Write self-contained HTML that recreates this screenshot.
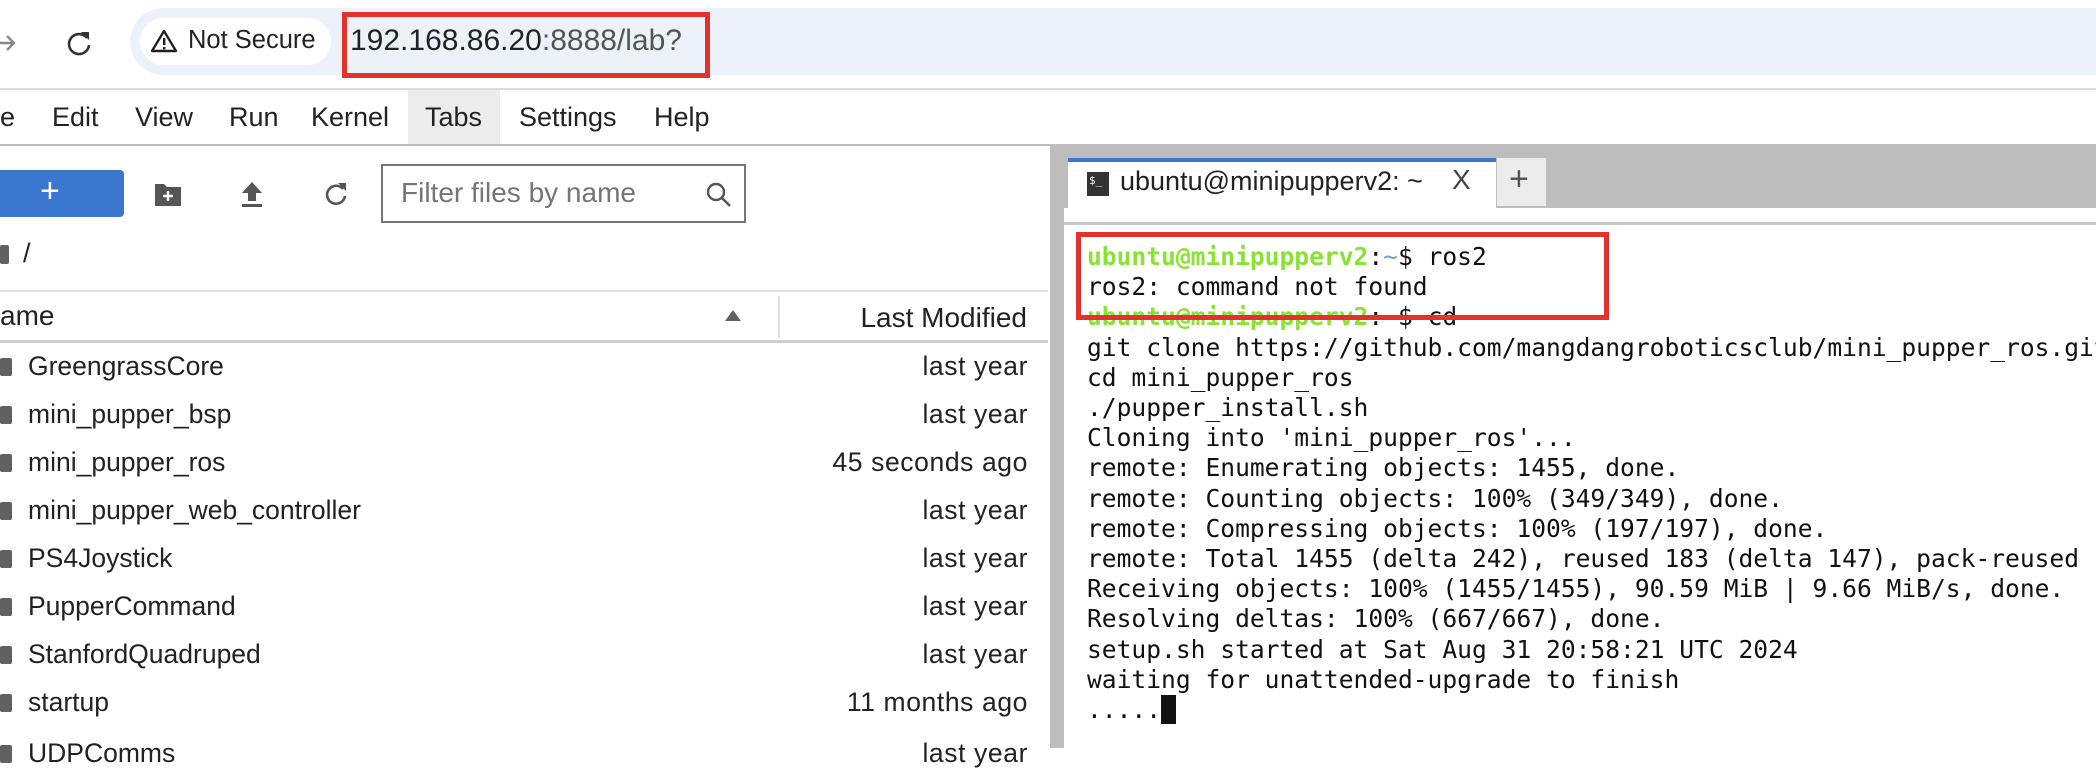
<!DOCTYPE html>
<html><head><meta charset="utf-8"><style>
*{margin:0;padding:0;box-sizing:border-box}
body{width:2096px;height:748px;overflow:hidden;background:#fff;font-family:"Liberation Sans",sans-serif;color:#222;position:relative}
.a{position:absolute;white-space:pre}
.menu{font-size:27px;top:102px;color:#222}
.row{position:absolute;left:0;width:1028px;height:48px;font-size:26.5px}
.row .ic{position:absolute;left:0;top:15px;width:12px;height:18px;background:#616161;border-radius:2px}
.row .n{position:absolute;left:28px;top:8px}
.row .d{position:absolute;right:0;top:8px;letter-spacing:0.6px}
.term{font-family:"DejaVu Sans Mono","Liberation Mono",monospace;font-size:24.6px;line-height:30.2px;color:#111}
.g{color:#8ae234;font-weight:bold}.b{color:#729fcf}
</style></head><body>
<div class="a" style="left:0;top:0;width:2096px;height:88px;background:#fff"></div>
<div class="a" style="left:130px;top:8px;width:2000px;height:67px;background:#edf2fa;border-radius:34px"></div>
<div class="a" style="left:140px;top:18px;width:191px;height:47px;background:#fff;border-radius:24px"></div>
<svg class="a" style="left:150px;top:28px" width="28" height="26" viewBox="0 0 28 26"><path d="M14 3 L26 23 H2 Z" fill="none" stroke="#222" stroke-width="2.4" stroke-linejoin="round"/><rect x="13" y="10" width="2.4" height="7" fill="#222"/><rect x="13" y="19" width="2.4" height="2.4" fill="#222"/></svg>
<div class="a" style="left:188px;top:26px;font-size:25.5px;color:#222">Not Secure</div>
<div class="a" style="left:350px;top:24px;font-size:30px;color:#222">192.168.86.20<span style="color:#555">:8888/lab?</span></div>
<div class="a" style="left:342px;top:12px;width:368px;height:66px;border:5px solid #e3322b"></div>
<svg class="a" style="left:0;top:28px" width="20" height="30"><path d="M0 15 H14 M7 8 L14 15 L7 22" stroke="#888" stroke-width="2.4" fill="none"/></svg>
<svg class="a" style="left:64px;top:28px" width="30" height="30" viewBox="0 0 30 30"><path d="M23 10 A10 10 0 1 0 25 17" stroke="#333" stroke-width="2.6" fill="none"/><path d="M17 4 L25 4 L25 12 Z" fill="#333"/></svg>
<div class="a" style="left:0;top:88px;width:2096px;height:2px;background:#ddd"></div>
<div class="a" style="left:408px;top:90px;width:92px;height:54px;background:#ececec"></div>
<div class="a menu" style="left:0">e</div>
<div class="a menu" style="left:52px">Edit</div>
<div class="a menu" style="left:135px">View</div>
<div class="a menu" style="left:229px">Run</div>
<div class="a menu" style="left:311px">Kernel</div>
<div class="a menu" style="left:425px">Tabs</div>
<div class="a menu" style="left:519px">Settings</div>
<div class="a menu" style="left:654px">Help</div>
<div class="a" style="left:0;top:144px;width:2096px;height:2px;background:#bdbdbd"></div>
<div class="a" style="left:0;top:170px;width:124px;height:47px;background:#3a78d0;border-radius:0 4px 4px 0"></div>
<div class="a" style="left:40px;top:172px;font-size:34px;color:#fff">+</div>
<svg class="a" style="left:154px;top:181px" width="28" height="26" viewBox="0 0 28 26"><path d="M1 3 H10 L13 6 H27 V25 H1 Z" fill="#555"/><path d="M14 10 V20 M9 15 H19" stroke="#fff" stroke-width="2.4"/></svg>
<svg class="a" style="left:240px;top:180px" width="24" height="28" viewBox="0 0 24 28"><path d="M12 2 L22 13 H16 V21 H8 V13 H2 Z" fill="#555"/><rect x="2" y="24" width="20" height="3" fill="#555"/></svg>
<svg class="a" style="left:322px;top:180px" width="28" height="28" viewBox="0 0 28 28"><path d="M21 9 A9 9 0 1 0 23 16" stroke="#555" stroke-width="2.6" fill="none"/><path d="M16 3 L24 3 L24 11 Z" fill="#555"/></svg>
<div class="a" style="left:381px;top:164px;width:365px;height:59px;border:2px solid #757575"></div>
<div class="a" style="left:401px;top:177px;font-size:28px;color:#757575">Filter files by name</div>
<svg class="a" style="left:704px;top:180px" width="30" height="30" viewBox="0 0 30 30"><circle cx="12" cy="12" r="8" stroke="#555" stroke-width="2.4" fill="none"/><path d="M18 18 L26 26" stroke="#555" stroke-width="2.6"/></svg>
<div class="a" style="left:0;top:245px;width:9px;height:19px;background:#616161;border-radius:2px"></div>
<div class="a" style="left:23px;top:238px;font-size:27px">/</div>
<div class="a" style="left:0;top:290px;width:1048px;height:2px;background:#e0e0e0"></div>
<div class="a" style="left:0;top:300px;font-size:28px">ame</div>
<svg class="a" style="left:725px;top:310px" width="16" height="12"><path d="M8 0 L16 11 H0 Z" fill="#616161"/></svg>
<div class="a" style="left:778px;top:296px;width:2px;height:42px;background:#e0e0e0"></div>
<div class="a" style="right:1069px;top:302px;font-size:28px">Last Modified</div>
<div class="a" style="left:0;top:340px;width:1048px;height:3px;background:#cfcfcf"></div>
<div class="row" style="top:343px"><div class="ic"></div><div class="n">GreengrassCore</div><div class="d">last year</div></div>
<div class="row" style="top:391px"><div class="ic"></div><div class="n">mini_pupper_bsp</div><div class="d">last year</div></div>
<div class="row" style="top:439px"><div class="ic"></div><div class="n">mini_pupper_ros</div><div class="d">45 seconds ago</div></div>
<div class="row" style="top:487px"><div class="ic"></div><div class="n">mini_pupper_web_controller</div><div class="d">last year</div></div>
<div class="row" style="top:535px"><div class="ic"></div><div class="n">PS4Joystick</div><div class="d">last year</div></div>
<div class="row" style="top:583px"><div class="ic"></div><div class="n">PupperCommand</div><div class="d">last year</div></div>
<div class="row" style="top:631px"><div class="ic"></div><div class="n">StanfordQuadruped</div><div class="d">last year</div></div>
<div class="row" style="top:679px"><div class="ic"></div><div class="n">startup</div><div class="d">11 months ago</div></div>
<div class="row" style="top:730px"><div class="ic"></div><div class="n">UDPComms</div><div class="d">last year</div></div>
<div class="a" style="left:1050px;top:146px;width:14px;height:602px;background:#bdbdbd"></div>
<div class="a" style="left:1064px;top:146px;width:1032px;height:62px;background:#bdbdbd"></div>
<div class="a" style="left:1068px;top:158px;width:428px;height:64px;background:#fff;border-top:4px solid #3a78d0"></div>
<div class="a" style="left:1087px;top:172px;width:22px;height:24px;background:#333"></div>
<div class="a" style="left:1089px;top:174px;font-size:11px;color:#fff;font-family:'DejaVu Sans Mono',monospace">$_</div>
<div class="a" style="left:1120px;top:166px;font-size:27px;color:#222">ubuntu@minipupperv2: ~</div>
<div class="a" style="left:1452px;top:164px;font-size:28px;color:#444">X</div>
<div class="a" style="left:1497px;top:158px;width:49px;height:48px;background:#ececec"></div>
<div class="a" style="left:1509px;top:160px;font-size:34px;color:#555">+</div>
<div class="a" style="left:1064px;top:208px;width:1032px;height:14px;background:#fff"></div>
<div class="a" style="left:1064px;top:222px;width:1032px;height:3px;background:#c8c8c8"></div>
<div class="a term" style="left:1087px;top:242px"><span class="g">ubuntu@minipupperv2</span>:<span class="b">~</span>$ ros2
ros2: command not found
<span class="g">ubuntu@minipupperv2</span>:<span class="b">~</span>$ cd ~
git clone https://github.com/mangdangroboticsclub/mini_pupper_ros.git
cd mini_pupper_ros
./pupper_install.sh
Cloning into 'mini_pupper_ros'...
remote: Enumerating objects: 1455, done.
remote: Counting objects: 100% (349/349), done.
remote: Compressing objects: 100% (197/197), done.
remote: Total 1455 (delta 242), reused 183 (delta 147), pack-reused 1106
Receiving objects: 100% (1455/1455), 90.59 MiB | 9.66 MiB/s, done.
Resolving deltas: 100% (667/667), done.
setup.sh started at Sat Aug 31 20:58:21 UTC 2024
waiting for unattended-upgrade to finish
.....<span style="background:#111;color:#111"> </span></div>
<div class="a" style="left:1076px;top:232px;width:533px;height:88px;border:5px solid #e3322b"></div>
</body></html>
